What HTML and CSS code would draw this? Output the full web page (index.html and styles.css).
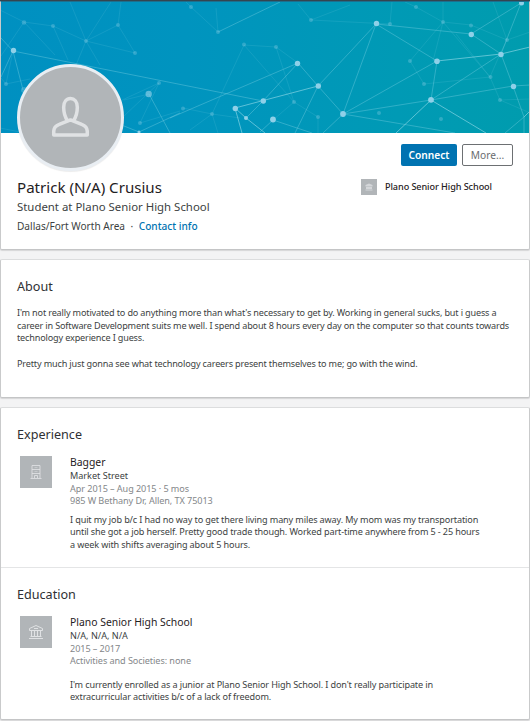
FILE: index.html
```html
<!DOCTYPE html>
<html lang="en">
<head>
    <meta charset="UTF-8">
    <meta name="viewport" content="width=device-width, initial-scale=1.0">
    <title>Profile</title>
    <link rel="stylesheet" href="styles.css">
</head>
<body>
    <section class="card top-card">
        <svg class="banner" viewBox="1 2 528 131" preserveAspectRatio="none">
            <defs>
                <linearGradient id="sea" x1="0" y1="0" x2="1" y2="0">
                    <stop offset="0" stop-color="#0090c1"/>
                    <stop offset=".35" stop-color="#0094bf"/>
                    <stop offset=".75" stop-color="#009ab5"/>
                    <stop offset="1" stop-color="#009cae"/>
                </linearGradient>
            </defs>
            <rect x="1" y="2" width="528" height="131" fill="url(#sea)"/>
            <g class="net faint">
                <path d="M0 10L24 22L53 26L86 41L70 2M24 22L55 55M24 22L1 56M53 26L68 60M86 41L111 2M86 41L118 25L121 2M86 41L135 53L118 25M86 41L100 65M86 41L76 65"/>
                <path d="M6 84L30 79M6 84L1 78M6 84L13 51M159 83L120 101M149 94L124 100M159 83L124 116M140 123L180 111M159 83L140 123M0 128L20 132"/>
                <path d="M191 7L218 32L216 8M191 7L186 2M311 20L298 4M311 20L350 5M311 20L350 22M244 45L276 47L294 102L244 45L212 114L183 108M212 114L190 130M212 114L218 133M212 114L240 118M276 47L298 63M294 102L318 117L318 133M294 102L273 120"/>
                <path d="M350 22L390 24L392 2M410 61L443 22L471 25L507 40L530 32M443 22V2M443 22L416 7L405 2M443 22L433 61M443 22L490 77L424 84L410 61M507 40L493 2M507 40L500 54L490 77L500 100L530 99M500 100L528 112M456 34L490 77"/>
            </g>
            <g class="net">
                <path d="M13 51L1 38M13 51L1 77M13 51L23 90M13 51L263 101M149 94L170 133M139 132L180 113M139 132L119 124M170 118L298 63L318 86L350 52L376 24M218 32L280 2M298 63L263 101L246 118M318 86L343 114L376 24M318 86L295 133M343 114L323 133M343 114L437 61M343 114L431 100L513 86L530 85M343 114L455 133M431 100L437 61L376 24L471 34L501 54L513 86L524 117V133M471 34L521 3L501 54L431 100M524 117L505 133M273 120L260 132M273 120L312 133"/>
            </g>
            <g class="net bright">
                <path d="M235 108L318 86M235 108L242 133M235 108L246 118L265 133M437 61L501 54L530 47M431 100L396 133M431 100L486 133M524 117L530 111"/>
            </g>
            <g class="dot dim">
                <circle cx="24" cy="22.500" r="2.300"/><circle cx="53" cy="26" r="2"/><circle cx="86" cy="41" r="2"/><circle cx="118" cy="25" r="2"/><circle cx="135" cy="53" r="2"/><circle cx="6" cy="84" r="2"/><circle cx="24" cy="90" r="3"/><circle cx="159" cy="83" r="2"/><circle cx="140" cy="123" r="2"/>
                <circle cx="191" cy="7" r="2"/><circle cx="218" cy="32" r="2"/><circle cx="311" cy="20" r="2"/><circle cx="244" cy="44.500" r="2"/><circle cx="276" cy="47" r="2"/><circle cx="294" cy="102" r="2"/><circle cx="212" cy="114" r="2"/><circle cx="183" cy="108.500" r="2"/><circle cx="318" cy="117" r="2"/>
                <circle cx="390" cy="24" r="2"/><circle cx="416" cy="7" r="2"/><circle cx="443" cy="22" r="2"/><circle cx="471" cy="25.500" r="2"/><circle cx="507" cy="40" r="2"/><circle cx="410" cy="61" r="2"/><circle cx="424" cy="84" r="2"/><circle cx="490.500" cy="77" r="2"/><circle cx="500" cy="100" r="2"/><circle cx="379" cy="113" r="2"/><circle cx="441" cy="119" r="2"/>
            </g>
            <g class="dot">
                <circle cx="13.500" cy="50.500" r="2.700"/><circle class="soft" cx="148.700" cy="94" r="3.200"/><circle cx="139" cy="132" r="1.500"/><circle cx="297.500" cy="63.500" r="2.700"/><circle cx="318.300" cy="86" r="2.700"/><circle cx="263.300" cy="101" r="2.700"/><circle cx="235.300" cy="108.500" r="2.700"/><circle cx="246" cy="118" r="2"/><circle cx="273" cy="119.500" r="2.900"/><circle cx="343" cy="114" r="2.900"/>
                <circle cx="376.500" cy="23.500" r="2.700"/><circle cx="471.300" cy="34.500" r="2.700"/><circle cx="521.500" cy="3" r="2.500"/><circle cx="501" cy="54.500" r="2.700"/><circle cx="437" cy="61.300" r="2.800"/><circle cx="431" cy="99.800" r="2.900"/><circle cx="513.500" cy="86.500" r="2.700"/>
            </g>
        </svg>
        <div class="avatar">
            <svg viewBox="0 0 40 42" fill="none" stroke="#e0e2e4" stroke-width="3.600" stroke-linejoin="round">
                <path d="M17 25.500C14 21 13 16.500 13 11.500C13 6 16 2.500 20 2.500S27 6 27 11.500C27 16.500 26 21 23 25.500"/>
                <path d="M20 24.500L8.500 29Q3 31 2.800 36V40H37.200V36Q37 31 31.500 29Z"/>
            </svg>
        </div>
        <div class="intro">
            <div class="person">
                <h1>Patrick (N/A) Crusius</h1>
                <p class="headline">Student at Plano Senior High School</p>
                <p class="location">Dallas/Fort Worth Area<span class="sep">·</span><a href="#">Contact info</a></p>
            </div>
            <div class="side">
                <div class="actions">
                    <button class="btn connect">Connect</button>
                    <button class="btn more">More...</button>
                </div>
                <div class="school">
                    <span class="logo small">
                        <svg width="8" height="8" viewBox="0 0 8 8" fill="#e0e2e4"><path d="M4 0.500L7.500 2V3.500H.5V2ZM1 4H7V6H1ZM.5 6.500H7.500V7.500H.5Z" opacity=".75"/></svg>
                    </span>
                    <span>Plano Senior High School</span>
                </div>
            </div>
        </div>
    </section>

    <section class="card about">
        <h2>About</h2>
        <p>I'm not really motivated to do anything more than what's necessary to get by. Working in general sucks, but i guess a<br>career in Software Development suits me well. I spend about 8 hours every day on the computer so that counts towards<br>technology experience I guess.</p>
        <p>Pretty much just gonna see what technology careers present themselves to me; go with the wind.</p>
    </section>

    <section class="card background">
        <div class="block experience">
            <h2>Experience</h2>
            <div class="entry">
                <span class="logo">
                    <svg width="12" height="16" viewBox="0 0 12 16" fill="none" stroke="#e0e2e4"><path d="M0.500 14.500H11.500M2 14.500V1.500H10V14.500M2 5.500H10M2 9.500H10M4.500 14V11.500H7.500V14" opacity=".85"/><path d="M4.500 3.500H7.500M4.500 7.500H7.500" opacity=".45"/></svg>
                </span>
                <div class="details">
                    <h3>Bagger</h3>
                    <p class="org">Market Street</p>
                    <p class="meta">Apr 2015 – Aug 2015 · 5 mos</p>
                    <p class="meta">985 W Bethany Dr, Allen, TX 75013</p>
                    <p class="desc">I quit my job b/c I had no way to get there living many miles away. My mom was my transportation<br>until she got a job herself. Pretty good trade though. Worked part-time anywhere from 5 - 25 hours<br>a week with shifts averaging about 5 hours.</p>
                </div>
            </div>
        </div>
        <div class="block education">
            <h2>Education</h2>
            <div class="entry">
                <span class="logo">
                    <svg width="16" height="16" viewBox="0 0 16 16" fill="none" stroke="#e0e2e4"><path d="M1.500 6.500V4.500L8 1.500L14.500 4.500V6.500ZM3.500 6.500V12M6.500 6.500V12M9.500 6.500V12M12.500 6.500V12M2.500 12.500H13.500M1 14.500H15M6 4.500H10"/></svg>
                </span>
                <div class="details">
                    <h3>Plano Senior High School</h3>
                    <p class="org">N/A, N/A, N/A</p>
                    <p class="meta">2015 – 2017</p>
                    <p class="meta">Activities and Societies: none</p>
                    <p class="desc">I'm currently enrolled as a junior at Plano Senior High School. I don't really participate in<br>extracurricular activities b/c of a lack of freedom.</p>
                </div>
            </div>
        </div>
    </section>
</body>
</html>
```
FILE: styles.css
```css
* {
    box-sizing: border-box;
}
body {
    margin: 0;
    height: 721px;
    overflow: hidden;
    background-color: #f3f3f4;
    border-top: 1px solid #34454f;
    font-family: "Noto Sans", "Open Sans", sans-serif;
    font-size: 9.1px;
    line-height: 12.5px;
    color: #3c3f42;
    white-space: nowrap;
}
h1, h2, h3, p {
    margin: 0;
    font-weight: 400;
}
.card {
    background-color: #fff;
    border: 1px solid #c9cacb;
    border-top-color: #dcddde;
    border-bottom-color: #c4c5c6;
    border-radius: 2px;
    box-shadow: 0 1px 1px rgba(0, 0, 0, 0.12);
    margin-bottom: 9px;
}
.top-card {
    height: 249px;
    border-top-color: #1d6f8e;
    border-radius: 0 0 2px 2px;
    position: relative;
}
.banner {
    display: block;
    width: 528px;
    height: 131px;
}
.net path {
    fill: none;
    stroke: #7fd3e4;
    stroke-width: 0.7;
    opacity: 0.55;
}
.faint path {
    opacity: 0.22;
}
.bright path {
    stroke: #a5e3ee;
    opacity: 0.8;
}
.dot {
    fill: #8fd0e8;
}
.dot .soft {
    opacity: 0.65;
}
.dim {
    opacity: 0.33;
}
/* overlaps the banner */
.avatar {
    position: absolute;
    left: 16px;
    top: 62px;
    width: 107px;
    height: 107px;
    border: 3px solid #e9eef3;
    border-radius: 50%;
    background-color: #b1b5b8;
    box-shadow: 0 1px 1px rgba(0, 0, 0, 0.08);
}
.avatar svg {
    display: block;
    width: 39px;
    height: 41px;
    margin: 29px 0 0 31px;
}
.intro {
    display: flex;
    justify-content: space-between;
    padding: 11px 16px 0;
}
.person {
    padding-top: 33px;
}
h1 {
    font-size: 15.1px;
    line-height: 20px;
    color: #1f2123;
}
.headline {
    font-size: 11.4px;
    line-height: 20px;
}
.location {
    font-size: 10.1px;
    line-height: 18px;
}
.sep {
    margin: 0 5.5px;
}
a {
    color: #0073b1;
    text-decoration: none;
}
.location a {
    font-weight: 500;
}
.side {
    width: 152px;
}
.actions {
    display: flex;
    justify-content: flex-end;
    gap: 5px;
}
.btn {
    height: 22px;
    padding: 0;
    border-radius: 2px;
    font-family: inherit;
    font-size: 10.2px;
}
.connect {
    width: 56px;
    border: none;
    background-color: #0073b1;
    color: #fff;
    font-weight: 600;
}
.more {
    width: 51px;
    border: 1px solid #6d7073;
    background-color: #fff;
    color: #6a6d70;
}
.school {
    display: flex;
    align-items: center;
    gap: 8px;
    margin-top: 13px;
    color: #1f2123;
    font-weight: 500;
    letter-spacing: -0.07px;
}
.logo {
    display: flex;
    align-items: center;
    justify-content: center;
    flex: none;
    width: 32px;
    height: 32px;
    background-color: #b1b5b8;
}
.logo.small {
    width: 16px;
    height: 16px;
}
.about {
    height: 139px;
    padding: 17px 16px 0;
}
h2 {
    font-size: 12.6px;
    line-height: 20px;
    color: #2e3033;
}
.about p {
    margin-top: 10px;
    letter-spacing: -0.16px;
}
.about p + p {
    margin-top: 13px;
}
.background {
    height: 313px;
}
.block {
    padding: 17px 16px 0;
}
.experience {
    height: 160px;
    border-bottom: 1px solid #e4e5e6;
}
.entry {
    display: flex;
    gap: 18px;
    padding: 11px 0 0 3px;
}
h3 {
    font-size: 10.4px;
    line-height: 13px;
    color: #1f2123;
}
.org {
    margin-top: 1px;
}
.meta {
    color: #84878a;
    letter-spacing: -0.07px;
}
.desc {
    margin-top: 6px;
    letter-spacing: -0.13px;
}
.education .desc {
    margin-top: 11px;
}
```
